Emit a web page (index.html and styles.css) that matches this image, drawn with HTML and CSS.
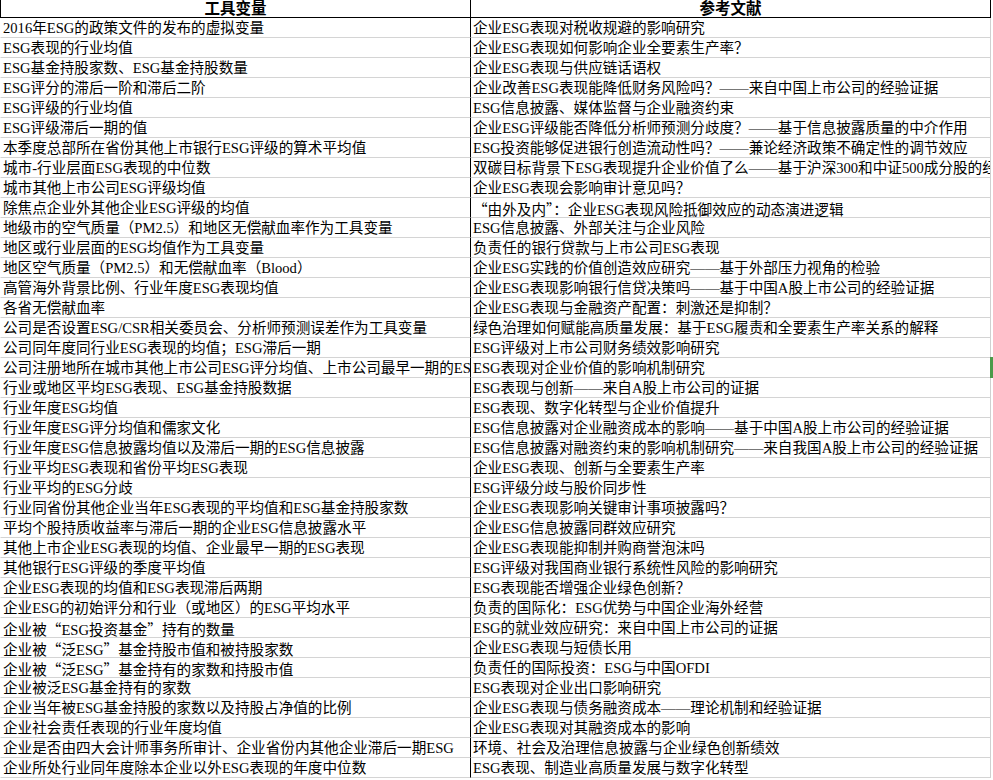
FILE: index.html
```html
<!DOCTYPE html>
<html lang="zh-CN">
<head>
<meta charset="utf-8">
<title>工具变量</title>
<link rel="stylesheet" href="styles.css">
</head>
<body>
<div class="sheet">
  <div class="row head"><div class="cell c1">工具变量</div><div class="cell c2">参考文献</div></div>
  <div class="row"><div class="cell c1">2016年ESG的政策文件的发布的虚拟变量</div><div class="cell c2">企业ESG表现对税收规避的影响研究</div></div>
  <div class="row"><div class="cell c1">ESG表现的行业均值</div><div class="cell c2">企业ESG表现如何影响企业全要素生产率？</div></div>
  <div class="row"><div class="cell c1">ESG基金持股家数、ESG基金持股数量</div><div class="cell c2">企业ESG表现与供应链话语权</div></div>
  <div class="row"><div class="cell c1">ESG评分的滞后一阶和滞后二阶</div><div class="cell c2">企业改善ESG表现能降低财务风险吗？——来自中国上市公司的经验证据</div></div>
  <div class="row"><div class="cell c1">ESG评级的行业均值</div><div class="cell c2">ESG信息披露、媒体监督与企业融资约束</div></div>
  <div class="row"><div class="cell c1">ESG评级滞后一期的值</div><div class="cell c2">企业ESG评级能否降低分析师预测分歧度？——基于信息披露质量的中介作用</div></div>
  <div class="row"><div class="cell c1">本季度总部所在省份其他上市银行ESG评级的算术平均值</div><div class="cell c2">ESG投资能够促进银行创造流动性吗？——兼论经济政策不确定性的调节效应</div></div>
  <div class="row"><div class="cell c1">城市-行业层面ESG表现的中位数</div><div class="cell c2">双碳目标背景下ESG表现提升企业价值了么——基于沪深300和中证500成分股的经验证据</div></div>
  <div class="row"><div class="cell c1">城市其他上市公司ESG评级均值</div><div class="cell c2">企业ESG表现会影响审计意见吗？</div></div>
  <div class="row"><div class="cell c1">除焦点企业外其他企业ESG评级的均值</div><div class="cell c2"><span class="cjk">“由外及内”</span>：企业ESG表现风险抵御效应的动态演进逻辑</div></div>
  <div class="row"><div class="cell c1">地级市的空气质量（PM2.5）和地区无偿献血率作为工具变量</div><div class="cell c2">ESG信息披露、外部关注与企业风险</div></div>
  <div class="row"><div class="cell c1">地区或行业层面的ESG均值作为工具变量</div><div class="cell c2">负责任的银行贷款与上市公司ESG表现</div></div>
  <div class="row"><div class="cell c1">地区空气质量（PM2.5）和无偿献血率（Blood）</div><div class="cell c2">企业ESG实践的价值创造效应研究——基于外部压力视角的检验</div></div>
  <div class="row"><div class="cell c1">高管海外背景比例、行业年度ESG表现均值</div><div class="cell c2">企业ESG表现影响银行信贷决策吗——基于中国A股上市公司的经验证据</div></div>
  <div class="row"><div class="cell c1">各省无偿献血率</div><div class="cell c2">企业ESG表现与金融资产配置：刺激还是抑制？</div></div>
  <div class="row"><div class="cell c1">公司是否设置ESG/CSR相关委员会、分析师预测误差作为工具变量</div><div class="cell c2">绿色治理如何赋能高质量发展：基于ESG履责和全要素生产率关系的解释</div></div>
  <div class="row"><div class="cell c1">公司同年度同行业ESG表现的均值；ESG滞后一期</div><div class="cell c2">ESG评级对上市公司财务绩效影响研究</div></div>
  <div class="row"><div class="cell c1">公司注册地所在城市其他上市公司ESG评分均值、上市公司最早一期的ESG评分</div><div class="cell c2">ESG表现对企业价值的影响机制研究</div></div>
  <div class="row"><div class="cell c1">行业或地区平均ESG表现、ESG基金持股数据</div><div class="cell c2">ESG表现与创新——来自A股上市公司的证据</div></div>
  <div class="row"><div class="cell c1">行业年度ESG均值</div><div class="cell c2">ESG表现、数字化转型与企业价值提升</div></div>
  <div class="row"><div class="cell c1">行业年度ESG评分均值和儒家文化</div><div class="cell c2">ESG信息披露对企业融资成本的影响——基于中国A股上市公司的经验证据</div></div>
  <div class="row"><div class="cell c1">行业年度ESG信息披露均值以及滞后一期的ESG信息披露</div><div class="cell c2">ESG信息披露对融资约束的影响机制研究——来自我国A股上市公司的经验证据</div></div>
  <div class="row"><div class="cell c1">行业平均ESG表现和省份平均ESG表现</div><div class="cell c2">企业ESG表现、创新与全要素生产率</div></div>
  <div class="row"><div class="cell c1">行业平均的ESG分歧</div><div class="cell c2">ESG评级分歧与股价同步性</div></div>
  <div class="row"><div class="cell c1">行业同省份其他企业当年ESG表现的平均值和ESG基金持股家数</div><div class="cell c2">企业ESG表现影响关键审计事项披露吗？</div></div>
  <div class="row"><div class="cell c1">平均个股持质收益率与滞后一期的企业ESG信息披露水平</div><div class="cell c2">企业ESG信息披露同群效应研究</div></div>
  <div class="row"><div class="cell c1">其他上市企业ESG表现的均值、企业最早一期的ESG表现</div><div class="cell c2">企业ESG表现能抑制并购商誉泡沫吗</div></div>
  <div class="row"><div class="cell c1">其他银行ESG评级的季度平均值</div><div class="cell c2">ESG评级对我国商业银行系统性风险的影响研究</div></div>
  <div class="row"><div class="cell c1">企业ESG表现的均值和ESG表现滞后两期</div><div class="cell c2">ESG表现能否增强企业绿色创新？</div></div>
  <div class="row"><div class="cell c1">企业ESG的初始评分和行业（或地区）的ESG平均水平</div><div class="cell c2">负责的国际化：ESG优势与中国企业海外经营</div></div>
  <div class="row"><div class="cell c1">企业被<span class="cjk">“</span>ESG投资基金<span class="cjk">”</span>持有的数量</div><div class="cell c2">ESG的就业效应研究：来自中国上市公司的证据</div></div>
  <div class="row"><div class="cell c1">企业被<span class="cjk">“</span>泛ESG<span class="cjk">”</span>基金持股市值和被持股家数</div><div class="cell c2">企业ESG表现与短债长用</div></div>
  <div class="row"><div class="cell c1">企业被<span class="cjk">“</span>泛ESG<span class="cjk">”</span>基金持有的家数和持股市值</div><div class="cell c2">负责任的国际投资：ESG与中国OFDI</div></div>
  <div class="row"><div class="cell c1">企业被泛ESG基金持有的家数</div><div class="cell c2">ESG表现对企业出口影响研究</div></div>
  <div class="row"><div class="cell c1">企业当年被ESG基金持股的家数以及持股占净值的比例</div><div class="cell c2">企业ESG表现与债务融资成本——理论机制和经验证据</div></div>
  <div class="row"><div class="cell c1">企业社会责任表现的行业年度均值</div><div class="cell c2">企业ESG表现对其融资成本的影响</div></div>
  <div class="row"><div class="cell c1">企业是否由四大会计师事务所审计、企业省份内其他企业滞后一期ESG</div><div class="cell c2">环境、社会及治理信息披露与企业绿色创新绩效</div></div>
  <div class="row"><div class="cell c1">企业所处行业同年度除本企业以外ESG表现的年度中位数</div><div class="cell c2">ESG表现、制造业高质量发展与数字化转型</div></div>
  <div class="sel"></div>
</div>
</body>
</html>
```
FILE: styles.css
```css
html, body {
  margin: 0;
  padding: 0;
  background: #fff;
  overflow: hidden;
}
body {
  font-family: "Liberation Serif", "Noto Sans CJK SC", serif;
  color: #000;
}
.sheet {
  position: relative;
  width: 993px;
  height: 780px;
}
.row {
  display: grid;
  grid-template-columns: 471px 520px;
}
.cell {
  box-sizing: border-box;
  height: 20px;
  border-bottom: 1px solid #d4d4d4;
  padding-left: 2px;
  padding-top: 1px;
  white-space: nowrap;
  overflow: hidden;
  font-size: 14.6px;
  line-height: 19px;
}
.cjk {
  font-family: "Noto Sans CJK SC", sans-serif;
}
.c1 {
  border-left: 1px solid transparent;
  border-right: 1px solid #000;
}
.c2 {
  border-right: 1px solid #d0d0d0;
}
.head .cell {
  height: 18px;
  border-bottom: 1px solid #000;
  font-weight: bold;
  text-align: center;
  font-size: 15.5px;
  line-height: 17px;
  padding: 0;
}
.head .c1 {
  border-left-color: #000;
}
.head .c2 {
  border-right-color: #000;
}
.sel {
  position: absolute;
  left: 990px;
  top: 357px;
  width: 3px;
  height: 21px;
  background: #4a9a4a;
}
```
